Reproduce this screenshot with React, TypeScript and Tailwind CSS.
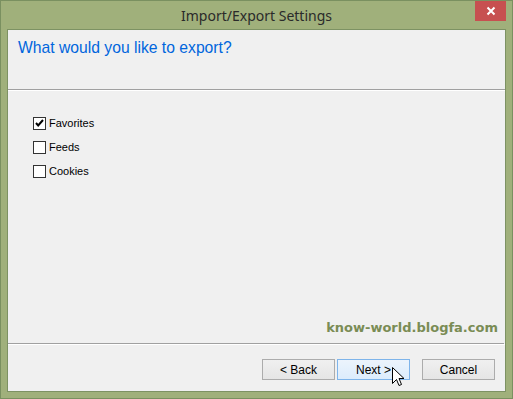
import React from "react";

function Checkbox({ checked, label }: { checked?: boolean; label: string }) {
  return (
    <div className="flex items-center h-[13px]">
      <div className="w-[13px] h-[13px] border border-[#333333] bg-white flex items-center justify-center">
        {checked && (
          <svg width="11" height="11" viewBox="0 0 11 11">
            <path d="M2 5 L4.2 7.5 L9 2" stroke="#000" strokeWidth="2" fill="none" />
          </svg>
        )}
      </div>
      <span className="ml-[3px] text-[11px] text-black leading-none" style={{ fontFamily: "'Liberation Sans', Arial, sans-serif" }}>
        {label}
      </span>
    </div>
  );
}

function Btn({ label, hover }: { label: string; hover?: boolean }) {
  return (
    <div
      className={
        "w-[73px] h-[21px] flex items-center justify-center text-[12px] text-black border " +
        (hover
          ? "border-[#7eb4ea] bg-gradient-to-b from-[#ecf4fc] to-[#dcecfc]"
          : "border-[#acacac] bg-gradient-to-b from-[#f0f0f0] to-[#e5e5e5]")
      }
      style={{ fontFamily: "'Liberation Sans', Arial, sans-serif" }}
    >
      {label}
    </div>
  );
}

export default function App() {
  return (
    <div className="w-[513px] h-[399px] bg-[#a0b07b] border border-[#7a9060] flex flex-col relative overflow-hidden">
      <div className="h-[28px] flex items-center justify-center relative">
        <span className="text-[14px] text-[#2a2a2a] mt-[1px]" style={{ fontFamily: "'Noto Sans', 'Open Sans', sans-serif" }}>
          Import/Export Settings
        </span>
        <div className="absolute right-[6px] top-0 w-[31px] h-[20px] bg-[#c75050] flex items-center justify-center">
          <svg width="10" height="10" viewBox="0 0 10 10">
            <path d="M1.5 1.5 L8.5 8.5 M8.5 1.5 L1.5 8.5" stroke="#fff" strokeWidth="2" />
          </svg>
        </div>
      </div>
      <div className="mx-[6px] h-[363px] border border-[#7d9263] bg-[#f0f0f0] flex flex-col relative">
        <div className="h-[59px] pl-[10px] pt-[8px]">
          <div className="text-[15.7px] text-[#0066dd] leading-[20px]" style={{ fontFamily: "'Liberation Sans', Arial, sans-serif" }}>
            What would you like to export?
          </div>
        </div>
        <div className="h-[1px] bg-[#a0a0a0]" />
        <div className="h-[1px] bg-white" />
        <div className="flex-1 flex flex-col gap-[11px] pl-[25px] pt-[26px]">
          <Checkbox checked label="Favorites" />
          <Checkbox label="Feeds" />
          <Checkbox label="Cookies" />
        </div>
        <div className="h-[1px] bg-[#a0a0a0] mr-[1px]" />
        <div className="h-[1px] bg-white" />
        <div className="h-[46px] flex items-start justify-end pt-[14px] pr-[10px]">
          <Btn label="< Back" />
          <div className="w-[2px]" />
          <Btn label="Next >" hover />
          <div className="w-[12px]" />
          <Btn label="Cancel" />
        </div>
        <div
          className="absolute right-[7px] top-[291px] text-[13px] font-bold text-[#7a8c55] leading-none"
          style={{ fontFamily: "'DejaVu Sans', Verdana, sans-serif" }}
        >
          know-world.blogfa.com
        </div>
        <svg className="absolute left-[384px] top-[337px]" width="13" height="21" viewBox="0 0 13 21">
          <path d="M0.5 0.5 L0.5 16.5 L4.5 12.5 L7 18.5 L9.5 17.5 L7 11.5 L12 11.5 Z" fill="#fff" stroke="#000" strokeWidth="1" />
        </svg>
      </div>
    </div>
  );
}
